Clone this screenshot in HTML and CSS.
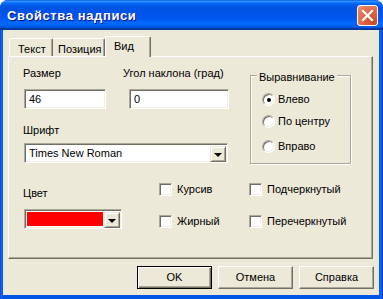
FILE: index.html
```html
<!DOCTYPE html>
<html lang="ru">
<head>
<meta charset="utf-8">
<title>Свойства надписи</title>
<link rel="stylesheet" href="styles.css">
</head>
<body>
<div class="window">
  <div class="titlebar">
    <span class="title">Свойства надписи</span>
    <span class="close">
      <svg width="19" height="19" viewBox="0 0 19 19"><path d="M5 5 L14 14 M14 5 L5 14" stroke="#fff" stroke-width="2.2" stroke-linecap="square"/></svg>
    </span>
  </div>
  <div class="frame">
    <div class="client">
      <div class="tabs">
        <div class="tab t1">Текст</div>
        <div class="tab t2">Позиция</div>
        <div class="tab t3 active">Вид</div>
      </div>
      <div class="panel">
        <div class="top">
          <div class="fields">
            <div class="row">
              <div class="field f-size">
                <div class="label">Размер</div>
                <div class="input w-size">46</div>
              </div>
              <div class="field f-angle">
                <div class="label">Угол наклона (град)</div>
                <div class="input w-angle">0</div>
              </div>
            </div>
            <div class="field f-font">
              <div class="label">Шрифт</div>
              <div class="select w-font">
                <span class="value">Times New Roman</span>
                <span class="dd"><span class="arrow"></span></span>
              </div>
            </div>
          </div>
          <div class="group">
            <div class="legend">Выравнивание</div>
            <div class="radio r1"><span class="circle checked"></span>Влево</div>
            <div class="radio r2"><span class="circle"></span>По центру</div>
            <div class="radio r3"><span class="circle"></span>Вправо</div>
          </div>
        </div>
        <div class="bottom">
          <div class="field f-color">
            <div class="label">Цвет</div>
            <div class="select w-color">
              <span class="swatch"></span>
              <span class="dd"><span class="arrow"></span></span>
            </div>
          </div>
          <div class="checks">
            <div class="check"><span class="box"></span>Курсив</div>
            <div class="check"><span class="box"></span>Подчеркнутый</div>
            <div class="check"><span class="box"></span>Жирный</div>
            <div class="check"><span class="box"></span>Перечеркнутый</div>
          </div>
        </div>
      </div>
      <div class="buttons">
        <div class="btn default">OK</div>
        <div class="btn">Отмена</div>
        <div class="btn">Справка</div>
      </div>
    </div>
  </div>
</div>
</body>
</html>
```
FILE: styles.css
```css
* { box-sizing: border-box; }
html, body { margin: 0; padding: 0; background: #fff; }
body {
  font-family: "Liberation Sans", Arial, sans-serif;
  font-size: 11px;
  line-height: 13px;
  color: #000;
}
.window {
  width: 383px;
  height: 299px;
  display: flex;
  flex-direction: column;
  border-radius: 8px 8px 0 0;
  overflow: hidden;
  background: #0054E3;
}
.titlebar {
  height: 30px;
  flex: none;
  display: flex;
  align-items: center;
  justify-content: space-between;
  padding: 0 5px 0 7px;
  background: linear-gradient(to bottom, #0058EE 0%, #3593FF 4%, #288EFF 6%, #127DFF 8%, #036FFC 10%, #0262EE 14%, #0057E5 20%, #0054E3 24%, #0055EB 56%, #005BF5 66%, #026AFE 76%, #0062EF 86%, #0052D6 92%, #0040AB 94%, #003092 100%);
}
.title {
  color: #fff;
  font-weight: bold;
  font-size: 13px;
  letter-spacing: 0.6px;
  text-shadow: 1px 1px #0F1089;
  margin-top: 1px;
}
.close {
  width: 21px;
  height: 21px;
  border: 1px solid #fff;
  border-radius: 3px;
  background: radial-gradient(circle at 85% 85%, #CC4622 0%, #E0603F 40%, #E87D5E 80%, #F0A58A 100%);
  display: flex;
  align-items: center;
  justify-content: center;
}
.close svg { display: block; }
.frame {
  flex: 1;
  padding: 0 4px 4px 3px;
  background: linear-gradient(to right, #0831D9 0, #166AEE 1px, #0055E5 3px, #0055E5 calc(100% - 4px), #166AEE calc(100% - 2px), #0831D9 100%);
  display: flex;
}
.client {
  flex: 1;
  background: #ECE9D8;
  padding: 6px 5px 6px 5px;
  display: flex;
  flex-direction: column;
}
.tabs {
  height: 20px;
  display: flex;
  align-items: flex-end;
  padding-left: 1px;
  position: relative;
  z-index: 1;
}
.tab {
  height: 18px;
  padding: 4px 0 0 7px;
  background: #ECE9D8;
  border-top: 1px solid #fff;
  border-left: 1px solid #fff;
  border-right: 1px solid #716F64;
  box-shadow: inset -1px 0 #ACA899;
  border-radius: 2px 2px 0 0;
  white-space: nowrap;
}
.t1 { width: 44px; padding-left: 8px; }
.t2 { width: 52px; padding-left: 5px; border-left: none; }
.t3 { width: 46px; padding-left: 8px; }
.tab.active {
  height: 21px;
  margin-bottom: -1px;
  padding-top: 3px;
}
.panel {
  height: 203px;
  margin-right: 1px;
  border-top: 1px solid #fff;
  border-left: 1px solid #fff;
  border-right: 1px solid #716F64;
  border-bottom: 1px solid #716F64;
  box-shadow: inset -1px -1px #ACA899;
  padding: 10px 0 0 14px;
  display: flex;
  flex-direction: column;
}
.top { display: flex; align-items: flex-start; }
.fields { width: 205px; }
.row { display: flex; }
.label { height: 13px; white-space: nowrap; }
.input, .select {
  height: 20px;
  background: #fff;
  border: 1px solid;
  border-color: #ACA899 #fff #fff #ACA899;
  box-shadow: inset 1px 1px #716F64, inset -1px -1px #F1EFE2;
}
.f-size .label { margin-bottom: 9px; }
.f-angle .label { margin-bottom: 9px; }
.w-size { width: 82px; margin-left: 1px; padding: 3px 0 0 4px; }
.f-angle { margin-left: 17px; }
.w-angle { width: 100px; margin-left: 6px; padding: 3px 0 0 4px; }
.f-font { margin-top: 15px; }
.f-font .label { margin-bottom: 6px; }
.select {
  display: flex;
  padding: 2px 1px 2px 2px;
}
.w-font { width: 204px; margin-left: 1px; }
.value { flex: 1; padding: 1px 0 0 2px; }
.dd {
  width: 16px;
  height: 16px;
  background: #ECE9D8;
  border: 1px solid;
  border-color: #ECE9D8 #716F64 #716F64 #ECE9D8;
  box-shadow: inset 1px 1px #fff, inset -1px -1px #ACA899;
  display: flex;
  align-items: center;
  justify-content: center;
}
.arrow {
  width: 0;
  height: 0;
  border-left: 4px solid transparent;
  border-right: 4px solid transparent;
  border-top: 4px solid #000;
  margin-top: 1px;
}
.group {
  margin: 8px 0 0 22px;
  width: 101px;
  height: 89px;
  border: 1px solid #ACA899;
  box-shadow: inset 1px 1px #fff, 1px 1px #fff;
  padding-left: 11px;
}
.legend {
  display: table;
  margin: -5px 0 0 -5px;
  padding: 0 2px;
  background: #ECE9D8;
}
.radio {
  display: flex;
  align-items: center;
  height: 13px;
  white-space: nowrap;
}
.r1 { margin-top: 9px; }
.r2 { margin-top: 9px; }
.r3 { margin-top: 12px; }
.circle {
  width: 13px;
  height: 13px;
  border-radius: 50%;
  background: #fff;
  border: 1px solid;
  border-color: #ACA899 #fff #fff #ACA899;
  box-shadow: inset 1px 1px #716F64, inset -1px -1px #F1EFE2;
  margin-right: 3px;
  display: flex;
  align-items: center;
  justify-content: center;
}
.circle.checked::after {
  content: "";
  width: 4px;
  height: 4px;
  border-radius: 50%;
  background: #000;
}
.bottom {
  display: flex;
  margin-top: 19px;
}
.f-color .label { margin: 4px 0 9px; }
.w-color { width: 98px; margin-left: 1px; }
.swatch { flex: 1; background: #FF0000; margin-right: 1px; }
.checks {
  margin-left: 37px;
  display: grid;
  grid-template-columns: 90px 110px;
  row-gap: 17px;
}
.check {
  display: flex;
  align-items: center;
  height: 13px;
  white-space: nowrap;
}
.box {
  width: 13px;
  height: 13px;
  background: #fff;
  border: 1px solid;
  border-color: #ACA899 #fff #fff #ACA899;
  box-shadow: inset 1px 1px #716F64, inset -1px -1px #F1EFE2;
  margin-right: 5px;
}
.buttons {
  display: flex;
  justify-content: flex-end;
  gap: 6px;
  margin-top: 7px;
}
.btn {
  width: 75px;
  height: 23px;
  display: flex;
  align-items: center;
  justify-content: center;
  background: #ECE9D8;
  border: 1px solid;
  border-color: #fff #716F64 #716F64 #fff;
  box-shadow: inset -1px -1px #ACA899;
}
.btn.default {
  border: 1px solid #000;
  box-shadow: inset 1px 1px #fff, inset -1px -1px #716F64, inset -2px -2px #ACA899;
}
```
